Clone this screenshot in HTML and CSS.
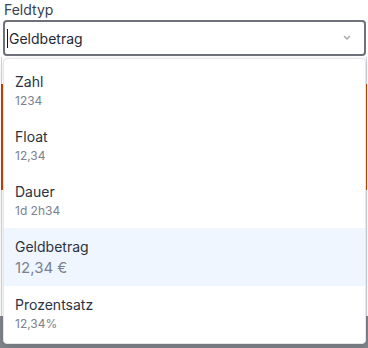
FILE: index.html
```html
<!DOCTYPE html>
<html>
<head>
<meta charset="utf-8">
<link rel="stylesheet" href="styles.css">
</head>
<body>
<div class="page">
  <div class="field">
    <div class="label">Feldtyp</div>
    <div class="select">
      <span class="caret"></span><span class="value">Geldbetrag</span>
      <svg class="chevron" width="10" height="10" viewBox="0 0 10 10"><path d="M2.5 3.5 L5 6 L7.5 3.5" fill="none" stroke="#a3a8b1" stroke-width="1.5" stroke-linecap="round" stroke-linejoin="round"/></svg>
    </div>
  </div>
  <div class="behind">
    <div class="gap-row"></div>
    <div class="accent-row"></div>
    <div class="plain-row"></div>
  </div>
  <div class="backdrop"></div>

  <div class="menu">
    <div class="item"><div class="title">Zahl</div><div class="sub">1234</div></div>
    <div class="item"><div class="title">Float</div><div class="sub">12,34</div></div>
    <div class="item"><div class="title">Dauer</div><div class="sub">1d 2h34</div></div>
    <div class="item active"><div class="title">Geldbetrag</div><div class="sub big">12,34 €</div></div>
    <div class="item"><div class="title">Prozentsatz</div><div class="sub">12,34%</div></div>
  </div>
</div>
</body>
</html>
```

FILE: styles.css
```css
html, body {
  margin: 0;
  padding: 0;
  background: #ffffff;
}
body {
  font-family: Inter, "Noto Sans", sans-serif;
  color: #1f2937;
  width: 368px;
  height: 348px;
  overflow: hidden;
}
.page {
  position: relative;
  height: 348px;
  display: flex;
  flex-direction: column;
}
.field {
  padding: 0 2px 0 3px;
}
.label {
  font-size: 14px;
  line-height: 20px;
  color: #374151;
  padding-left: 1px;
}
.select {
  height: 36px;
  box-sizing: border-box;
  border: 2px solid #6e7179;
  border-radius: 4px;
  display: flex;
  align-items: center;
  padding: 0 12px 0 2px;
  font-size: 14px;
}
.caret {
  width: 1px;
  height: 19px;
  background: #111827;
  margin-right: 1px;
}
.value {
  flex: 1;
  color: #1f2937;
}
.chevron {
  display: block;
}
.behind {
  margin: 1px 1px 0 1px;
  display: flex;
  flex-direction: column;
}
.gap-row {
  height: 27px;
  border-left: 1px solid #d1d5db;
  border-right: 1px solid #d1d5db;
}
.accent-row {
  height: 106px;
  border-left: 2px solid #c2410c;
  border-right: 2px solid #c2410c;
}
.plain-row {
  height: 126px;
  border-left: 1px solid #d1d5db;
  border-right: 1px solid #d1d5db;
}
.backdrop {
  flex: 1;
  background: #7f838a;
}
.menu {
  position: absolute;
  top: 58px;
  left: 3px;
  width: 363px;
  box-sizing: border-box;
  background: #ffffff;
  border: 1px solid #e5e7eb;
  border-radius: 4px;
  box-shadow: 0 2px 6px rgba(0, 0, 0, 0.12);
  padding: 4px 0 2px;
}
.item {
  padding: 9px 12px 8px 11px;
}
.item.active {
  background: #eff6ff;
}
.title {
  font-size: 14px;
  line-height: 20px;
  color: #2b3340;
}
.sub {
  font-size: 12px;
  line-height: 18px;
  color: #7b818e;
}
.sub.big {
  font-size: 15px;
  line-height: 21px;
}
```
